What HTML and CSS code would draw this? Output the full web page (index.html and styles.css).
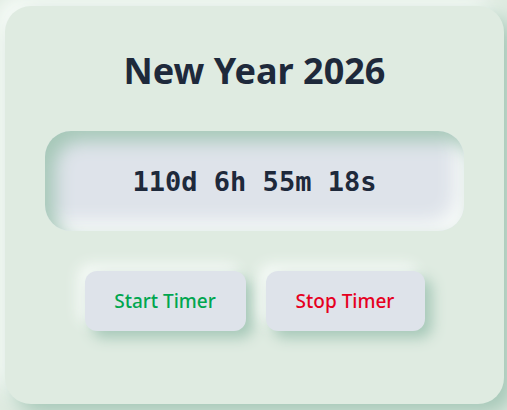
FILE: index.html
```html
<!DOCTYPE html>
<html>
<head>
<meta charset="utf-8">
<link rel="stylesheet" href="styles.css">
</head>
<body>
<div class="card">
  <h1 class="title">New Year 2026</h1>
  <div class="timer">110d 6h 55m 18s</div>
  <div class="actions">
    <button class="btn btn-start">Start Timer</button>
    <button class="btn btn-stop">Stop Timer</button>
  </div>
</div>
</body>
</html>
```
FILE: styles.css
```css
html, body {
  margin: 0;
  background: #dfebe1;
}
body {
  padding: 6px 0 0 5px;
  width: 507px;
  height: 410px;
  box-sizing: border-box;
  overflow: hidden;
  font-family: "Noto Sans", "Open Sans", sans-serif;
}
.card {
  width: 499px;
  height: 398px;
  box-sizing: border-box;
  background: #dfebe1;
  border-radius: 26px;
  box-shadow: 10px 10px 20px #a6c8b8, -10px -10px 20px #f8fcf9;
  padding: 42px 40px 0;
  display: flex;
  flex-direction: column;
  align-items: center;
}
.title {
  margin: 0;
  font-size: 36px;
  font-weight: 700;
  color: #1e293b;
  line-height: 46px;
  letter-spacing: 0;
}
.timer {
  margin-top: 37px;
  width: 100%;
  height: 100px;
  box-sizing: border-box;
  border-radius: 26px;
  background: #dee3ea;
  box-shadow: inset 10px 10px 18px #a6c8b8, inset -10px -10px 18px #f6f9f8;
  display: flex;
  align-items: center;
  justify-content: center;
  font-family: "DejaVu Sans Mono", monospace;
  font-weight: 700;
  font-size: 27px;
  color: #1e293b;
}
.actions {
  margin-top: 40px;
  display: flex;
  gap: 20px;
}
.btn {
  height: 60px;
  border: none;
  border-radius: 12px;
  background: #dee3ea;
  box-shadow: 7px 7px 14px #a6c8b8, -7px -7px 14px #f6faf7;
  font-family: "Noto Sans", "Open Sans", sans-serif;
  font-size: 19px;
  font-weight: 500;
  padding: 0 20px;
}
.btn-start { width: 161px; color: #00a64f; }
.btn-stop { width: 159px; color: #e6001f; }
```
